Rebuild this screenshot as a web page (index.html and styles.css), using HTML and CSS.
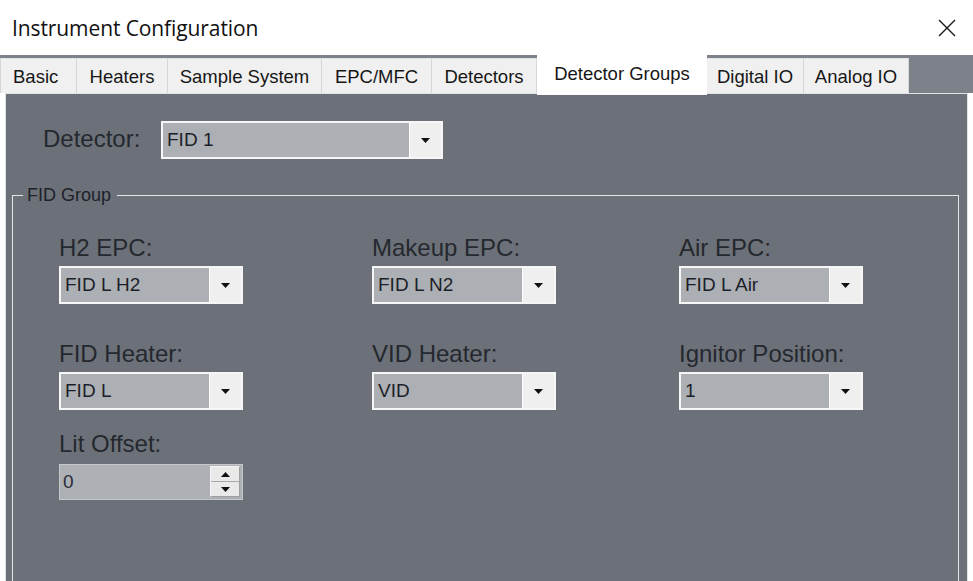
FILE: index.html
```html
<!DOCTYPE html>
<html>
<head>
<meta charset="utf-8">
<link rel="stylesheet" href="styles.css">
</head>
<body>
<div class="window">
  <header class="titlebar">
    <span class="title">Instrument Configuration</span>
    <svg class="close" width="20" height="18" viewBox="0 0 20 18"><path d="M2 1 L18 17 M18 1 L2 17" stroke="#1a1a1a" stroke-width="1.4" fill="none"/></svg>
  </header>
  <nav class="tabs">
    <div class="tab t-basic">Basic</div>
    <div class="tab t-heaters">Heaters</div>
    <div class="tab t-sample">Sample System</div>
    <div class="tab t-epc">EPC/MFC</div>
    <div class="tab t-det">Detectors</div>
    <div class="tab tab-active t-groups">Detector Groups</div>
    <div class="tab t-digital">Digital IO</div>
    <div class="tab t-analog">Analog IO</div>
  </nav>
  <main class="panel">
    <div class="detector-row">
      <span class="label det-label">Detector:</span>
      <div class="combo combo-wide">
        <span class="combo-value">FID 1</span>
        <span class="combo-btn"><svg width="9" height="5" viewBox="0 0 9 5"><polygon points="0,0 9,0 4.5,5" fill="#111"/></svg></span>
      </div>
    </div>
    <fieldset class="group">
      <legend class="group-title">FID Group</legend>
      <div class="grid">
        <div class="field">
          <span class="label">H2 EPC:</span>
          <div class="combo"><span class="combo-value">FID L H2</span><span class="combo-btn"><svg width="9" height="5" viewBox="0 0 9 5"><polygon points="0,0 9,0 4.5,5" fill="#111"/></svg></span></div>
        </div>
        <div class="field">
          <span class="label">Makeup EPC:</span>
          <div class="combo"><span class="combo-value">FID L N2</span><span class="combo-btn"><svg width="9" height="5" viewBox="0 0 9 5"><polygon points="0,0 9,0 4.5,5" fill="#111"/></svg></span></div>
        </div>
        <div class="field">
          <span class="label">Air EPC:</span>
          <div class="combo"><span class="combo-value">FID L Air</span><span class="combo-btn"><svg width="9" height="5" viewBox="0 0 9 5"><polygon points="0,0 9,0 4.5,5" fill="#111"/></svg></span></div>
        </div>
        <div class="field row2">
          <span class="label">FID Heater:</span>
          <div class="combo"><span class="combo-value">FID L</span><span class="combo-btn"><svg width="9" height="5" viewBox="0 0 9 5"><polygon points="0,0 9,0 4.5,5" fill="#111"/></svg></span></div>
        </div>
        <div class="field row2">
          <span class="label">VID Heater:</span>
          <div class="combo"><span class="combo-value">VID</span><span class="combo-btn"><svg width="9" height="5" viewBox="0 0 9 5"><polygon points="0,0 9,0 4.5,5" fill="#111"/></svg></span></div>
        </div>
        <div class="field row2">
          <span class="label">Ignitor Position:</span>
          <div class="combo"><span class="combo-value">1</span><span class="combo-btn"><svg width="9" height="5" viewBox="0 0 9 5"><polygon points="0,0 9,0 4.5,5" fill="#111"/></svg></span></div>
        </div>
        <div class="field row3">
          <span class="label">Lit Offset:</span>
          <div class="spin">
            <span class="spin-value">0</span>
            <span class="spin-btns">
              <span class="spin-btn"><svg width="9" height="5" viewBox="0 0 9 5"><polygon points="0,5 9,5 4.5,0" fill="#111"/></svg></span>
              <span class="spin-btn"><svg width="9" height="5" viewBox="0 0 9 5"><polygon points="0,0 9,0 4.5,5" fill="#111"/></svg></span>
            </span>
          </div>
        </div>
      </div>
    </fieldset>
  </main>
</div>
</body>
</html>
```
FILE: styles.css
```css
* { box-sizing: border-box; }
html, body {
  margin: 0;
  padding: 0;
  background: #ffffff;
  width: 973px;
  height: 581px;
  overflow: hidden;
}
.window {
  width: 973px;
  height: 581px;
  display: flex;
  flex-direction: column;
  font-family: "Liberation Sans", Arial, sans-serif;
}
.titlebar {
  height: 55px;
  flex: none;
  display: flex;
  align-items: center;
  justify-content: space-between;
  padding: 0 16px 0 12px;
  background: #ffffff;
}
.title {
  font-family: "Open Sans", "Noto Sans", sans-serif;
  font-size: 21px;
  letter-spacing: -0.1px;
  color: #111;
  padding-top: 1px;
}
.close { display: block; }

.tabs {
  height: 38px;
  flex: none;
  display: flex;
  align-items: flex-end;
  background: #7d8189;
  position: relative;
  z-index: 2;
}
.tab {
  height: 35px;
  background: #f0f0f0;
  border-right: 1px solid #d6d6d6;
  border-top: 1px solid #e4e4e4;
  font-size: 18.5px;
  color: #161616;
  display: flex;
  align-items: center;
  justify-content: center;
  padding-top: 2px;
  white-space: nowrap;
}
.t-basic { width: 77px; justify-content: flex-start; padding-left: 12px; border-left: 1px solid #d6d6d6; }
.t-heaters { width: 91px; }
.t-sample { width: 154px; }
.t-epc { width: 110px; }
.t-det { width: 105px; }
.t-groups { width: 170px; }
.t-digital { width: 97px; }
.t-analog { width: 105px; }
.tab-active {
  height: 40px;
  margin-bottom: -2px;
  background: #ffffff;
  border-top: none;
  border-right: none;
  padding-top: 0;
  padding-bottom: 3px;
}

.panel {
  flex: none;
  height: 520px;
  margin: 0 5px;
  background: #6c7179;
  border: 1px solid #e2e2e2;
  border-bottom: none;
  padding-top: 27px;
  position: relative;
  z-index: 1;
}
.label {
  font-size: 24px;
  line-height: 28px;
  color: #25282e;
  display: block;
  white-space: nowrap;
}
.detector-row {
  display: flex;
  align-items: center;
  padding-left: 37px;
}
.det-label {
  width: 118px;
  margin-top: -3px;
}
.combo {
  width: 184px;
  height: 38px;
  display: flex;
  border: 2px solid #f6f6f6;
  background: #acafb3;
  margin-top: 4px;
}
.combo-wide {
  width: 282px;
  margin-top: 0;
}
.combo-value {
  flex: 1;
  font-size: 19px;
  line-height: 34px;
  color: #1c1f2a;
  padding-left: 4px;
  white-space: nowrap;
}
.combo-btn {
  width: 32px;
  background: #efefef;
  border-left: 1px solid #ffffff;
  display: flex;
  align-items: center;
  justify-content: center;
}
.combo-btn svg { display: block; }

.group {
  margin: 25px 8px 0 6px;
  padding: 0;
  border: 1px solid #e2e4e7;
  height: 420px;
  min-width: 0;
}
.group-title {
  font-size: 18px;
  line-height: 22px;
  color: #1e2128;
  margin-left: 10px;
  padding: 0 6px 0 4px;
}
.grid {
  display: grid;
  grid-template-columns: 313px 307px 184px;
  padding: 28px 0 0 46px;
}
.row2 { margin-top: 36px; }
.row3 { margin-top: 20px; }

.spin {
  width: 184px;
  height: 36px;
  margin-top: 6px;
  display: flex;
  background: #adb0b4;
  border: 1px solid #c4c6c9;
}
.spin-value {
  flex: 1;
  font-size: 19px;
  line-height: 34px;
  color: #2a2c3a;
  padding-left: 3px;
}
.spin-btns {
  width: 30px;
  margin: 1px 2px 2px 0;
  display: flex;
  flex-direction: column;
  border: 1px solid #f4f4f4;
  border-right-color: #a0a0a0;
  border-bottom-color: #a0a0a0;
}
.spin-btn {
  flex: 1;
  background: #e9e9e9;
  display: flex;
  align-items: center;
  justify-content: center;
}
.spin-btn + .spin-btn { border-top: 1px solid #a8a8a8; }
.spin-btn svg { display: block; }
```
